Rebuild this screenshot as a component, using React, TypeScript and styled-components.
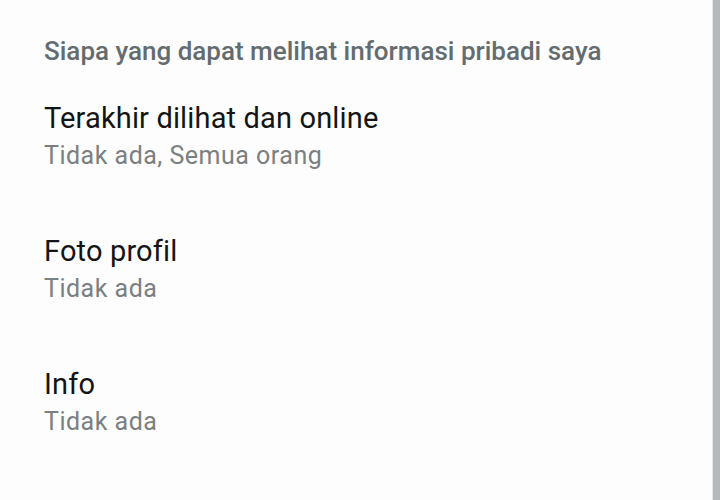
import React from "react";
import styled, { createGlobalStyle } from "styled-components";

const Global = createGlobalStyle`
  html, body { margin: 0; padding: 0; background: #fdfdfd; }
  body { font-family: Roboto, "Noto Sans", Arial, sans-serif; }
`;

const Screen = styled.div`
  display: flex;
  width: 720px;
  height: 500px;
  overflow: hidden;
  background: #fdfdfd;
`;

const Content = styled.div`
  flex: 1;
  display: flex;
  flex-direction: column;
  padding: 36px 0 0 44px;
`;

const Scrollbar = styled.div`
  width: 7px;
  border-left: 1px solid #e4e7e7;
  background: #b4babb;
`;

const SectionTitle = styled.div`
  font-size: 26px;
  line-height: 30px;
  font-weight: 500;
  color: #646c70;
`;

const List = styled.div`
  display: flex;
  flex-direction: column;
  gap: 64px;
  margin-top: 35px;
`;

const Row = styled.div`
  display: flex;
  flex-direction: column;
  gap: 7px;
`;

const Title = styled.div`
  font-size: 29px;
  line-height: 34px;
  letter-spacing: 0.15px;
  color: #141414;
`;

const Subtitle = styled.div`
  font-size: 25px;
  line-height: 28px;
  letter-spacing: 0.5px;
  color: #7a7f82;
`;

const items = [
  { title: "Terakhir dilihat dan online", sub: "Tidak ada, Semua orang" },
  { title: "Foto profil", sub: "Tidak ada" },
  { title: "Info", sub: "Tidak ada" },
];

export default function App() {
  return (
    <>
      <Global />
      <Screen>
        <Content>
          <SectionTitle>Siapa yang dapat melihat informasi pribadi saya</SectionTitle>
          <List>
            {items.map((it) => (
              <Row key={it.title}>
                <Title>{it.title}</Title>
                <Subtitle>{it.sub}</Subtitle>
              </Row>
            ))}
          </List>
        </Content>
        <Scrollbar />
      </Screen>
    </>
  );
}
